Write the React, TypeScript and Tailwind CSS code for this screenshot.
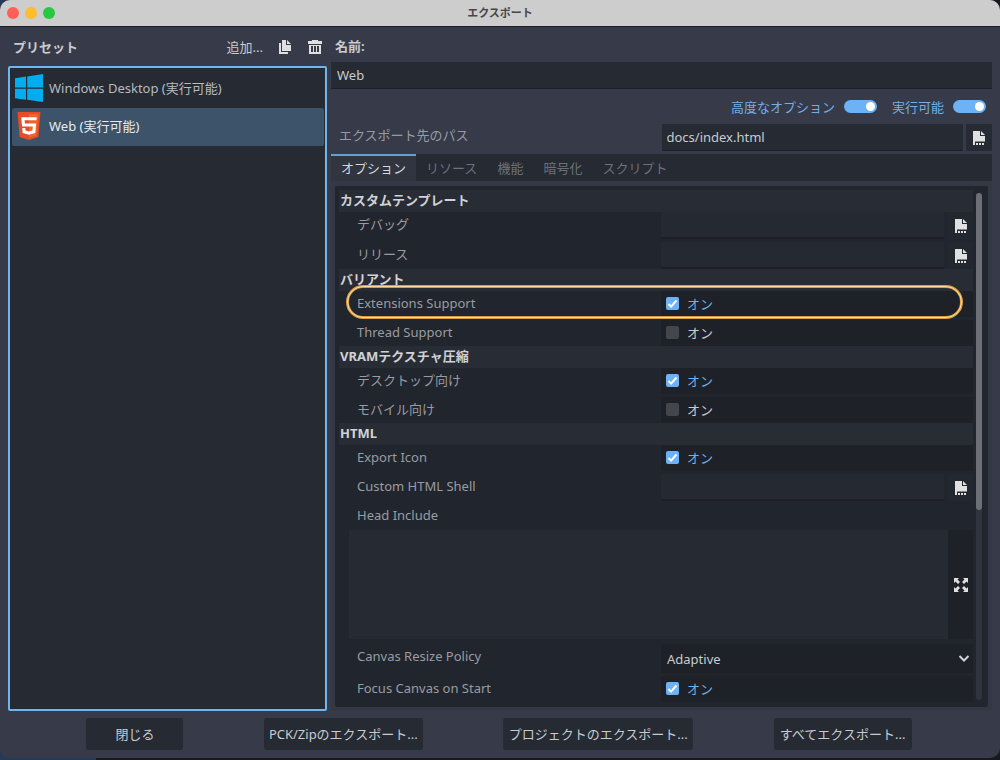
import { useState, type ReactNode } from "react";

const presets = [
  { id: "windows", name: "Windows Desktop (実行可能)", icon: <WindowsLogo /> },
  { id: "web", name: "Web (実行可能)", icon: <Html5Logo /> },
];

const tabs = ["オプション", "リソース", "機能", "暗号化", "スクリプト"];

const actions = [
  { label: "閉じる", width: "w-[97px]" },
  { label: "PCK/Zipのエクスポート...", width: "w-[159px]" },
  { label: "プロジェクトのエクスポート...", width: "w-[190px]" },
  { label: "すべてエクスポート...", width: "w-[138px]" },
];

function WindowsLogo() {
  return (
    <svg className="w-7 h-7" viewBox="0 0 28 28" fill="#00adef">
      <path d="M0 4.2 11 2.6v11H0zM12.2 2.4 28 0v13.6H12.2zM0 14.8h11v11L0 24.3zM12.2 14.8H28V28l-15.8-2.2z" />
    </svg>
  );
}

function Html5Logo() {
  return (
    <svg className="w-7 h-7" viewBox="0 0 512 512">
      <path fill="#e44d26" d="M84 456 46 0h420l-38 456-172 56z" />
      <path fill="#f16529" d="M256 472l139-44L430 37H256z" />
      <path
        fill="#fff"
        d="M114 94h283l-5 56H176l5 58h206l-16 174-116 32-115-32-7-89h56l4 45 63 17 63-17 7-73H129z"
      />
    </svg>
  );
}

function FileIcon() {
  return (
    <svg className="w-4 h-4" viewBox="0 0 16 16" fill="#e0e0e0">
      <path d="M2 1h7v5h5v5.500H4V15H2z" />
      <path d="M10 1l4 4h-4z" />
      <path d="M5 13h2v2H5zM8 13h2v2H8zM11 13h2v2h-2z" />
    </svg>
  );
}

function DuplicateIcon() {
  return (
    <svg className="w-4 h-4" viewBox="0 0 16 16" fill="#e0e0e0">
      <path d="M5 1v11h9V6H9V1zM10 1v4h4z" />
      <path d="M2 4h2v9h7v2H2z" />
    </svg>
  );
}

function TrashIcon() {
  return (
    <svg className="w-4 h-4" viewBox="0 0 16 16" fill="#e0e0e0">
      <path d="M5 1v1H1v3h14V2h-4V1z" />
      <path fillRule="evenodd" d="M2 6v9h12V6zm2 1h2v6H4zm3 0h2v6H7zm3 0h2v6h-2z" />
    </svg>
  );
}

function ExpandIcon() {
  return (
    <svg className="w-4 h-4" viewBox="0 0 16 16" fill="#e0e0e0">
      <path d="M1 1h5L4.500 2.500 7 5 5 7 2.500 4.500 1 6zM15 1v5l-1.500-1.500L11 7 9 5l2.500-2.500L10 1zM1 15v-5l1.500 1.500L5 9l2 2-2.500 2.500L6 15zM15 15h-5l1.500-1.500L9 11l2-2 2.500 2.500L15 10z" />
    </svg>
  );
}

function Toggle({ label }: { label: string }) {
  return (
    <label className="flex items-center gap-[9px] text-[#70b0e6]">
      {label}
      <input
        type="checkbox"
        role="switch"
        defaultChecked
        className="flex appearance-none items-center justify-start w-[33px] h-[13px] p-[2px] rounded-full bg-[#565b67] checked:justify-end checked:bg-[#6cb2f5] before:w-[9px] before:h-[9px] before:rounded-full before:bg-white"
      />
    </label>
  );
}

function Section({ title, children }: { title: string; children: ReactNode }) {
  return (
    <section>
      <h2 className="h-[22px] px-px leading-5 font-bold bg-[#282c35] text-[#d0d2d6]">{title}</h2>
      <div className="flex flex-col gap-[3px]">{children}</div>
    </section>
  );
}

function Row({ id, label, children }: { id: string; label: string; children: ReactNode }) {
  return (
    <div className="grid grid-cols-[322fr_312fr] min-h-[26px]">
      <label htmlFor={id} className="pl-[18px] pt-[3px] leading-[18px] text-[#9a9ca1]">
        {label}
      </label>
      {children}
    </div>
  );
}

function CheckRow({ id, label, checked = false }: { id: string; label: string; checked?: boolean }) {
  const [on, setOn] = useState(checked);

  return (
    <Row id={id} label={label}>
      <div className="flex items-center gap-2 px-[5px] pb-px bg-[#1e2127]">
        <span className="relative flex">
          <input
            id={id}
            type="checkbox"
            checked={on}
            onChange={(e) => setOn(e.target.checked)}
            className="appearance-none w-[13px] h-[13px] rounded-[2px] bg-[#43464d] checked:bg-[#6cb2f5]"
          />
          {on && (
            <svg className="absolute inset-0 pointer-events-none" viewBox="0 0 13 13" fill="none" stroke="#fff" strokeWidth={2}>
              <path d="M2.500 7l2.600 2.600L10.500 3.500" />
            </svg>
          )}
        </span>
        <span className={on ? "text-[#70b0e6]" : "text-[#c9cbd0]"}>オン</span>
      </div>
    </Row>
  );
}

function FileRow({ id, label }: { id: string; label: string }) {
  return (
    <Row id={id} label={label}>
      <div className="flex gap-1 h-[27px]">
        <input id={id} type="text" className="flex-1 min-w-0 px-1.5 bg-[#252932] border-b-2 border-[#1d2027]" />
        <button type="button" aria-label="ファイルを選択" className="flex items-center justify-center w-[25px] bg-[#232730]">
          <FileIcon />
        </button>
      </div>
    </Row>
  );
}

export default function App() {
  const [preset, setPreset] = useState("web");
  const [tab, setTab] = useState(tabs[0]);

  return (
    <div className="h-screen pb-[2px] bg-[linear-gradient(90deg,#263a54_96px,#17191f_96px)] font-['Noto_Sans','Noto_Sans_CJK_JP',sans-serif] text-[13px] leading-[18px] text-[#c9cbd0]">
      <div className="flex flex-col h-full rounded-[10px] overflow-hidden bg-[#373b49]">
        {/* Title bar */}
        <header className="grid grid-cols-3 items-center h-[27px] px-[7px] bg-[#cdcdcd] border-b border-[#1c1e25]">
          <div className="flex gap-[6px]">
            <span className="w-3 h-3 rounded-full bg-[#fe5f57]" />
            <span className="w-3 h-3 rounded-full bg-[#febc2e]" />
            <span className="w-3 h-3 rounded-full bg-[#28c840]" />
          </div>
          <h1 className="text-center text-[11px] font-bold text-[#474747]">エクスポート</h1>
        </header>

        <main className="flex flex-1 min-h-0 gap-1 px-2 pt-2">
          {/* Preset list */}
          <div className="flex flex-col w-[319px] shrink-0">
            <div className="flex items-center h-6 mb-[7px] pl-[5px] pr-1">
              <h2 className="flex-1 font-bold">プリセット</h2>
              <button type="button" className="mr-[14px]">追加...</button>
              <button type="button" aria-label="複製" className="mr-[14px]">
                <DuplicateIcon />
              </button>
              <button type="button" aria-label="削除">
                <TrashIcon />
              </button>
            </div>
            <ul className="flex-1 py-[2px] pl-[2px] pr-px border-2 rounded-[2px] border-[#70b5eb] bg-[#252a33]">
              {presets.map((p) => (
                <li key={p.id}>
                  <button
                    type="button"
                    onClick={() => setPreset(p.id)}
                    className={`flex items-center gap-[6px] w-full h-[38px] pl-[3px] pb-[2px] rounded-[2px] text-left ${
                      preset === p.id ? "bg-[#3c5369] text-[#e8ebee]" : "text-[#b9bbc0]"
                    }`}
                  >
                    {p.icon}
                    {p.name}
                  </button>
                </li>
              ))}
            </ul>
          </div>

          {/* Settings of the selected preset */}
          <div className="flex flex-col flex-1 min-w-0">
            <label htmlFor="preset-name" className="h-6 mb-[3px] pl-1 leading-[23px] font-bold">
              名前:
            </label>
            <input
              id="preset-name"
              type="text"
              defaultValue="Web"
              className="h-[27px] px-[6px] bg-[#252a33] border-b border-[#1d2027]"
            />

            <div className="flex items-center justify-end gap-[15px] h-[35px] pr-[6px]">
              <Toggle label="高度なオプション" />
              <Toggle label="実行可能" />
            </div>

            <div className="grid grid-cols-2 h-[27px] mb-[3px]">
              <label htmlFor="export-path" className="pl-2 leading-[23px] text-[#989ba3]">
                エクスポート先のパス
              </label>
              <div className="flex gap-[3px]">
                <input
                  id="export-path"
                  type="text"
                  defaultValue="docs/index.html"
                  className="flex-1 min-w-0 px-[5px] bg-[#252a33] border-b border-[#1d2027]"
                />
                <button type="button" aria-label="参照" className="flex items-center justify-center w-[26px] bg-[#252a33]">
                  <FileIcon />
                </button>
              </div>
            </div>

            <div role="tablist" className="flex h-[27px] bg-[#252a33]">
              {tabs.map((t) => (
                <button
                  key={t}
                  type="button"
                  role="tab"
                  aria-selected={tab === t}
                  onClick={() => setTab(t)}
                  className={`px-[10px] pb-[2px] border-t-2 ${
                    tab === t ? "border-[#659fce] bg-[#31353f] text-[#d6d8dc]" : "border-transparent text-[#6d7179]"
                  }`}
                >
                  {t}
                </button>
              ))}
            </div>

            <div className="flex-1 min-h-0 pt-[5px] px-1 pb-1 bg-[#343845]">
              <div className="flex h-full py-1 pl-1 pr-[6px] gap-[3px] rounded-[2px] bg-[#21252d]">
                <div className="flex-1 min-w-0 overflow-hidden">
                  <Section title="カスタムテンプレート">
                    <FileRow id="debug" label="デバッグ" />
                    <FileRow id="release" label="リリース" />
                  </Section>
                  <Section title="バリアント">
                    <div className="relative">
                      <CheckRow id="extensions" label="Extensions Support" checked />
                      {/* Callout around the setting */}
                      <div className="absolute -top-[6px] -bottom-[2px] left-[7px] right-[10px] rounded-full border-[3px] border-[#d99a45] pointer-events-none">
                        <div className="absolute -inset-[2px] rounded-full border border-[#ffdf9a]" />
                      </div>
                    </div>
                    <CheckRow id="threads" label="Thread Support" />
                  </Section>
                  <Section title="VRAMテクスチャ圧縮">
                    <CheckRow id="desktop" label="デスクトップ向け" checked />
                    <CheckRow id="mobile" label="モバイル向け" />
                  </Section>
                  <Section title="HTML">
                    <CheckRow id="icon" label="Export Icon" checked />
                    <FileRow id="shell" label="Custom HTML Shell" />
                    <label htmlFor="head" className="h-[23px] pl-[18px] leading-[22px] text-[#9a9ca1]">
                      Head Include
                    </label>
                    <div className="flex h-[109px] pl-[10px]">
                      <textarea id="head" className="flex-1 min-w-0 resize-none p-1.5 bg-[#252a33]" />
                      <button type="button" aria-label="拡大" className="flex items-center justify-center w-[25px] bg-[#1e2127]">
                        <ExpandIcon />
                      </button>
                    </div>
                    <div className="pt-[2px]">
                      <Row id="resize" label="Canvas Resize Policy">
                        <div className="relative flex h-[29px] bg-[#1e2127]">
                          <select id="resize" defaultValue="Adaptive" className="flex-1 appearance-none px-1.5">
                            <option>None</option>
                            <option>Project</option>
                            <option>Adaptive</option>
                          </select>
                          <svg
                            className="absolute right-[3px] top-2 w-3 h-3 pointer-events-none"
                            viewBox="0 0 12 12"
                            fill="none"
                            stroke="#d0d2d6"
                            strokeWidth={2}
                          >
                            <path d="M1.500 4L6 8.500 10.500 4" />
                          </svg>
                        </div>
                      </Row>
                    </div>
                    <CheckRow id="focus" label="Focus Canvas on Start" checked />
                  </Section>
                </div>
                <div className="w-[6px] mt-[3px] mb-[3px] rounded-full bg-[#30343d]">
                  <div className="h-5/8 rounded-full bg-[#6c6f75]" />
                </div>
              </div>
            </div>
          </div>
        </main>

        <footer className="flex items-center justify-evenly pl-[6px] pr-2 pt-[7px] pb-2">
          {actions.map((a) => (
            <button key={a.label} type="button" className={`h-8 rounded-[3px] whitespace-nowrap bg-[#252a33] ${a.width}`}>
              {a.label}
            </button>
          ))}
        </footer>
      </div>
    </div>
  );
}
